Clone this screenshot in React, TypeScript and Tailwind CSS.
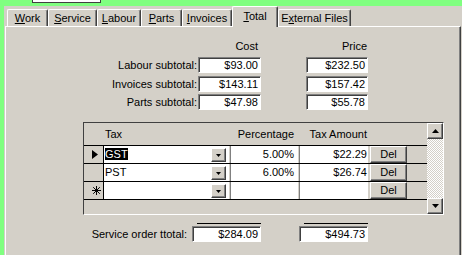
import React from "react";

/* ---------------- Win classic borders ---------------- */

const raised =
  "border border-t-white border-l-white border-r-[#404040] border-b-[#404040] shadow-[inset_-1px_-1px_0_#808080]";
const sunken =
  "border border-t-[#808080] border-l-[#808080] border-r-white border-b-white shadow-[inset_1px_1px_0_#404040]";

type TabDef = { pre: string; key: string; post: string; w: string; active?: boolean };

const tabs: TabDef[] = [
  { pre: "", key: "W", post: "ork", w: "w-[41px]" },
  { pre: "", key: "S", post: "ervice", w: "w-[49px]" },
  { pre: "", key: "L", post: "abour", w: "w-[44px]" },
  { pre: "", key: "P", post: "arts", w: "w-[41px]" },
  { pre: "", key: "I", post: "nvoices", w: "w-[50px]" },
  { pre: "", key: "T", post: "otal", w: "w-[46px]", active: true },
  { pre: "E", key: "x", post: "ternal Files", w: "w-[73px]" },
];

const subtotals = [
  { label: "Labour subtotal:", cost: "$93.00", price: "$232.50", mt: "mt-[4px]" },
  { label: "Invoices subtotal:", cost: "$143.11", price: "$157.42", mt: "mt-[3px]" },
  { label: "Parts subtotal:", cost: "$47.98", price: "$55.78", mt: "mt-[2px]" },
];

type TaxRow = { tax: string; pct: string; amt: string; marker: "current" | "none" | "new" };

const taxRows: TaxRow[] = [
  { tax: "GST", pct: "5.00%", amt: "$22.29", marker: "current" },
  { tax: "PST", pct: "6.00%", amt: "$26.74", marker: "none" },
  { tax: "", pct: "", amt: "", marker: "new" },
];

function Arrow({ dir }: { dir: "up" | "down" }) {
  return (
    <svg width="7" height="4" viewBox="0 0 7 4">
      {dir === "down" ? (
        <polygon points="0,0 7,0 3.5,4" fill="#000" />
      ) : (
        <polygon points="0,4 7,4 3.5,0" fill="#000" />
      )}
    </svg>
  );
}

function Marker({ kind }: { kind: TaxRow["marker"] }) {
  if (kind === "current")
    return (
      <svg width="6" height="9" viewBox="0 0 6 9">
        <polygon points="0,0 6,4.5 0,9" fill="#000" />
      </svg>
    );
  if (kind === "new")
    return (
      <svg width="9" height="9" viewBox="0 0 9 9" stroke="#000" strokeWidth="1">
        <line x1="4.5" y1="0" x2="4.5" y2="9" />
        <line x1="0" y1="4.5" x2="9" y2="4.5" />
        <line x1="1.2" y1="1.2" x2="7.8" y2="7.8" />
        <line x1="7.8" y1="1.2" x2="1.2" y2="7.8" />
      </svg>
    );
  return null;
}

export default function App() {
  return (
    <div className="w-[462px] h-[255px] overflow-hidden bg-[#80ff80] flex flex-col font-['Liberation_Sans',Arial,sans-serif] text-[11px] text-black">
      {/* top strip with a cut-off field */}
      <div className="h-[6px] flex">
        <div className="ml-[32px] w-[69px] h-[3px] bg-white border-x border-b border-[#404040]" />
      </div>

      <div className="flex-1 ml-[4px] bg-[#d4d0c8] flex flex-col">
        {/* TABS */}
        <div className="h-[20px] flex items-end pl-[3px]">
          {tabs.map((t) => (
            <div
              key={t.post}
              className={
                t.active
                  ? `${t.w} h-[21px] -mb-[1px] relative z-10 bg-[#d4d0c8] border-t border-l border-r border-t-white border-l-white border-r-[#404040] shadow-[inset_-1px_0_0_#808080] rounded-t-[2px] flex justify-center pt-[3px] leading-[13px]`
                  : `${t.w} h-[17px] border-t border-l border-r border-t-white border-l-white border-r-[#404040] shadow-[inset_-1px_0_0_#808080] rounded-t-[2px] flex justify-center items-center leading-[13px]`
              }
            >
              <span>
                {t.pre}
                <u>{t.key}</u>
                {t.post}
              </span>
            </div>
          ))}
        </div>

        {/* PANEL */}
        <div className="flex-1 ml-[1px] mr-[1px] border-t border-l border-r border-t-white border-l-white border-r-[#404040] shadow-[inset_-1px_0_0_#808080] flex flex-col">
          {/* column heads */}
          <div className="mt-[13px] h-[13px] flex leading-[13px]">
            <div className="w-[192px]" />
            <div className="w-[63px] text-right pr-[3px]">Cost</div>
            <div className="ml-[45px] w-[62px] text-right pr-[1px]">Price</div>
          </div>

          {/* subtotals */}
          {subtotals.map((s) => (
            <div key={s.label} className={`${s.mt} h-[16px] flex`}>
              <div className="w-[192px] text-right pr-[1px] leading-[16px]">{s.label}</div>
              <div className={`w-[63px] h-[16px] bg-white ${sunken} text-right pr-[2px] leading-[14px]`}>
                {s.cost}
              </div>
              <div className={`ml-[45px] w-[62px] h-[16px] bg-white ${sunken} text-right pr-[2px] leading-[14px]`}>
                {s.price}
              </div>
            </div>
          ))}

          {/* TAX GRID */}
          <div className="mt-[12px] ml-[77px] w-[361px] h-[93px] border border-t-[#404040] border-l-[#404040] border-r-white border-b-white flex">
            <div className="flex-1 flex flex-col">
              <div className="h-[23px] border-b border-black flex items-center leading-[13px]">
                <div className="w-[20px]" />
                <div className="w-[125px] pl-[1px]">Tax</div>
                <div className="w-[2px]" />
                <div className="w-[67px] text-right pr-[4px]">Percentage</div>
                <div className="w-[2px]" />
                <div className="w-[68px] text-right pr-[1px]">Tax Amount</div>
              </div>

              {taxRows.map((r, i) => (
                <div key={i} className="h-[18px] border-b border-black flex leading-[13px]">
                  <div className="w-[20px] border-r border-black flex items-center pl-[8px]">
                    <Marker kind={r.marker} />
                  </div>
                  <div className="w-[125px] bg-white flex items-center pl-[1px]">
                    <span className="flex-1">
                      {r.marker === "current" ? (
                        <span className="bg-black text-white">{r.tax}</span>
                      ) : (
                        r.tax
                      )}
                    </span>
                    <div className={`w-[15px] h-[14px] mr-[3px] bg-[#d4d0c8] ${raised} flex items-center justify-center pt-[2px]`}>
                      <svg width="5" height="3" viewBox="0 0 5 3">
                        <polygon points="0,0 5,0 2.5,3" fill="#000" />
                      </svg>
                    </div>
                  </div>
                  <div className="w-[2px] border-r border-[#808080]" />
                  <div className="w-[67px] bg-white flex items-center justify-end pr-[4px]">{r.pct}</div>
                  <div className="w-[2px] border-r border-[#808080]" />
                  <div className="w-[68px] bg-white flex items-center justify-end pr-[1px]">{r.amt}</div>
                  <div className="w-[2px]" />
                  <div className={`w-[37px] h-full ${raised} flex items-center justify-center`}>Del</div>
                  <div className="flex-1" />
                </div>
              ))}

              <div className="flex-1" />
            </div>

            {/* scrollbar */}
            <div className="w-[16px] flex flex-col">
              <div className={`h-[16px] bg-[#d4d0c8] ${raised} flex items-center justify-center`}>
                <Arrow dir="up" />
              </div>
              <div className="flex-1 bg-[repeating-conic-gradient(#ffffff_0_25%,#d4d0c8_0_50%)] bg-[length:2px_2px]" />
              <div className={`h-[16px] bg-[#d4d0c8] ${raised} flex items-center justify-center`}>
                <Arrow dir="down" />
              </div>
            </div>
          </div>

          {/* TOTALS */}
          <div className="mt-[8px] h-[1px] flex">
            <div className="w-[191px]" />
            <div className="w-[64px] bg-black" />
            <div className="ml-[43px] w-[64px] bg-black" />
          </div>
          <div className="mt-[2px] h-[16px] flex">
            <div className="w-[186px] text-right pr-[5px] leading-[16px]">Service order ttotal:</div>
            <div className={`w-[69px] h-[16px] bg-white ${sunken} text-right pr-[2px] leading-[14px]`}>$284.09</div>
            <div className={`ml-[38px] w-[69px] h-[16px] bg-white ${sunken} text-right pr-[2px] leading-[14px]`}>$494.73</div>
          </div>
        </div>
      </div>
    </div>
  );
}
